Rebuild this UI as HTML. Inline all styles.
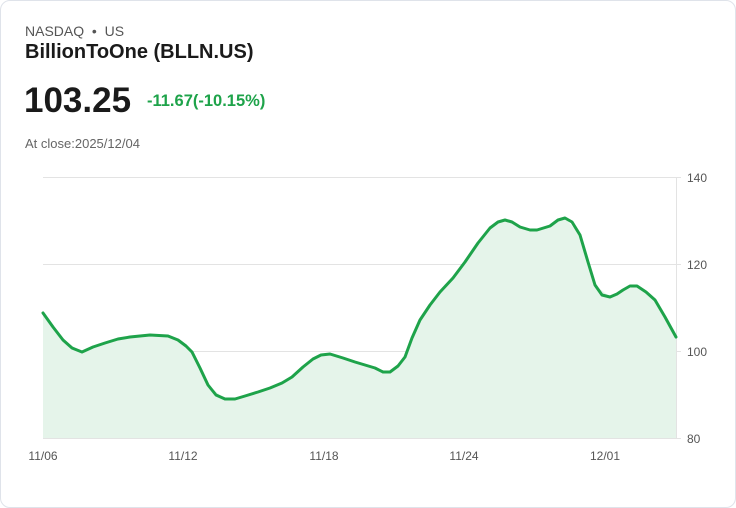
<!DOCTYPE html>
<html><head><style>
body{margin:0;background:#fff;font-family:"Liberation Sans",sans-serif;}
.card{position:absolute;left:0;top:0;width:734px;height:506px;border:1px solid #dfe3ea;border-radius:10px;background:#fff;}
.t{position:absolute;white-space:nowrap;}
</style></head><body>
<div class="card"></div>
<div class="t" style="left:25px;top:23px;font-size:14px;color:#555;">NASDAQ &nbsp;•&nbsp; US</div>
<div class="t" style="left:25px;top:41px;font-size:20px;font-weight:bold;color:#1a1a1a;">BillionToOne (BLLN.US)</div>
<div class="t" style="left:24px;top:81px;font-size:35px;font-weight:bold;color:#1a1a1a;">103.25</div>
<div class="t" style="left:147px;top:92px;font-size:16.5px;font-weight:bold;color:#1ea34a;">-11.67(-10.15%)</div>
<div class="t" style="left:25px;top:136px;font-size:13px;color:#666;">At close:2025/12/04</div>
<svg width="736" height="508" style="position:absolute;left:0;top:0">
<g stroke="#e3e3e3" stroke-width="1">
<line x1="43" y1="177.5" x2="681" y2="177.5"/><line x1="43" y1="264.5" x2="681" y2="264.5"/>
<line x1="43" y1="351.5" x2="681" y2="351.5"/><line x1="43" y1="438.5" x2="681" y2="438.5"/>
<line x1="676.5" y1="177" x2="676.5" y2="438"/>
</g>
<polygon fill="#e5f4ea" points="43,313 63,340 82,352 105,343 130,337 150,335 175,338 192,352 208,385 225,399 245,396 270,388 292,377 313,359 330,354 355,362 375,368 390,372 405,357 420,320 440,292 465,262 490,228 505,220 520,227 537,230 565,218 580,235 595,285 610,297 623,290 637,286 655,300 676,337 676,438 43,438"/>
<polyline fill="none" stroke="#1ea34a" stroke-width="3" stroke-linejoin="round" stroke-linecap="round" points="43,313 53,327 63,340 72,348 82,352 93,347 105,343 118,339 130,337 150,335 168,336 178,340 186,346 192,352 200,368 208,385 216,395 225,399 235,399 245,396 258,392 270,388 282,383 292,377 303,367 313,359 321,355 330,354 343,358 355,362 365,365 375,368 383,372 390,372 398,366 405,357 412,338 420,320 430,305 440,292 453,278 465,262 478,243 490,228 498,222 505,220 512,222 520,227 530,230 537,230 550,226 558,220 565,218 572,222 580,235 588,262 595,285 602,295 610,297 617,294 623,290 630,286 637,286 646,292 655,300 665,317 676,337"/>
<g font-size="12" fill="#555" font-family="Liberation Sans,sans-serif">
<text x="687" y="182">140</text><text x="687" y="269">120</text><text x="687" y="356">100</text><text x="687" y="443">80</text>
<text x="43" y="460" text-anchor="middle">11/06</text><text x="183" y="460" text-anchor="middle">11/12</text>
<text x="324" y="460" text-anchor="middle">11/18</text><text x="464" y="460" text-anchor="middle">11/24</text>
<text x="605" y="460" text-anchor="middle">12/01</text>
</g>
</svg>
</body></html>
